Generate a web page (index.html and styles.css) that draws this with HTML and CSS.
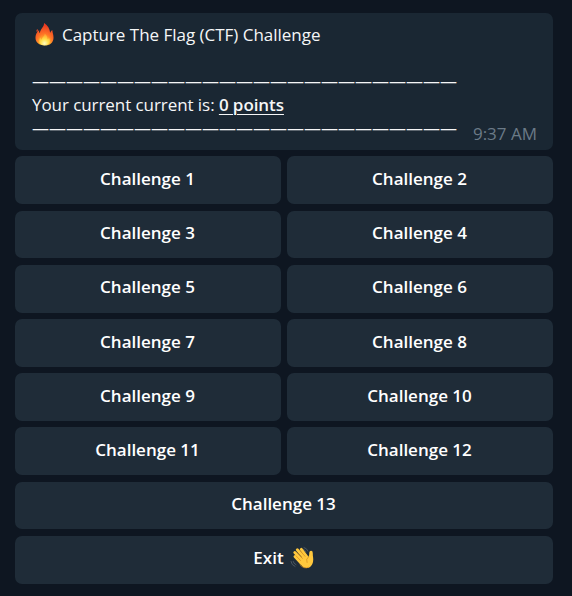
FILE: index.html
```html
<!DOCTYPE html>
<html lang="en">
<head>
<meta charset="utf-8">
<title>CTF Challenge</title>
<link rel="stylesheet" href="styles.css">
</head>
<body>
<main class="chat">
  <section class="bubble">
    <div class="line title">
      <svg class="fire" viewBox="0 0 20 24" aria-hidden="true">
        <defs>
          <radialGradient id="flame" cx=".5" cy=".95" r=".85">
            <stop offset="0" stop-color="#fff28a"/>
            <stop offset=".3" stop-color="#ffb52c"/>
            <stop offset=".55" stop-color="#ff7426"/>
            <stop offset="1" stop-color="#ea3a22"/>
          </radialGradient>
          <radialGradient id="core" cx=".5" cy=".85" r=".8">
            <stop offset="0" stop-color="#fffbc0"/>
            <stop offset=".45" stop-color="#ffe04a"/>
            <stop offset="1" stop-color="#ff9a2c"/>
          </radialGradient>
        </defs>
        <path fill="url(#flame)" d="M9.500 0C10 4 5.400 6 5.200 10.500C4.300 10 4.200 8.500 4.400 7.200C1.500 9.500.5 12.500.5 15.500C.5 20.500 4.500 23.500 10 23.500C15.500 23.500 19.500 20.500 19.500 15.300C19.500 12 18.400 10.300 18.200 7.200C16.800 8 16.200 9.300 16 10.400C15.500 6 13.500 2.500 9.500 0Z"/>
        <path fill="#ec4a26" d="M2.500 6.200C1.400 7.200 1.300 8.600 2 9.300C3.100 8.700 3.300 7.500 2.500 6.200Z"/>
        <path fill="url(#core)" d="M10 11C10.600 14 7.300 14.500 7.300 17.200C6.200 16.800 5.800 15.800 5.700 14.800C3.200 18.500 4 23 10 23.200C16 23 16.700 18.500 14.700 15.200C14.400 16.200 13.900 16.800 13.200 17C13.300 14.500 12 12.300 10 11Z"/>
      </svg>
      <span>Capture The Flag (CTF) Challenge</span>
    </div>
    <div class="line"></div>
    <div class="line">—————————————————————————</div>
    <div class="line score">Your current current is: <b class="points">0 points</b></div>
    <div class="line last">—————————————————————————<time class="time">9:37 AM</time></div>
  </section>
  <section class="keyboard">
    <button class="key">Challenge 1</button>
    <button class="key">Challenge 2</button>
    <button class="key">Challenge 3</button>
    <button class="key">Challenge 4</button>
    <button class="key">Challenge 5</button>
    <button class="key">Challenge 6</button>
    <button class="key">Challenge 7</button>
    <button class="key">Challenge 8</button>
    <button class="key">Challenge 9</button>
    <button class="key">Challenge 10</button>
    <button class="key">Challenge 11</button>
    <button class="key">Challenge 12</button>
    <button class="key wide">Challenge 13</button>
    <button class="key wide">Exit
      <svg class="wave" viewBox="0 0 24 24" aria-hidden="true">
        <g fill="none" stroke="#4c5761" stroke-width="1" stroke-linecap="round">
          <path d="M14 1.500Q17 2.200 17.800 5M13.500 3.500Q15.500 4 16 6M1 15.500Q1.400 19 5 20.500M3.200 15.500Q3.500 17.500 6 18.700"/>
        </g>
        <g fill="none" stroke="#ffc83d" stroke-width="2.900" stroke-linecap="round">
          <path d="M5 10.500L11 17M4.800 6.500L12 14M7.300 3.800L14.500 12M11.300 3.300L17 11"/>
        </g>
        <path fill="#ffc83d" d="M8 14L16 8.500L18.300 11Q19.500 9 19.300 6.500Q19.500 4.500 21.300 4.700Q23 5 22.800 7.500C22.600 10 23.800 12.500 23 16C22 21 17.500 23.500 13.500 21.300C11.500 20 9.500 17 8 14Z"/>
        <path fill="none" stroke="#d68b1d" stroke-width=".7" stroke-linecap="round" d="M6 9.800L10.500 14.500M7.500 7L12.500 12.500M10.300 5L15 10.300M18.300 11Q15.500 13 17 16.500M10 18.800Q14 23.500 18.500 21.300"/>
      </svg>
    </button>
  </section>
</main>
</body>
</html>
```
FILE: styles.css
```css
* {
  box-sizing: border-box;
}

body {
  margin: 0;
  min-height: 596px;
  background: #0e1621;
  color: #f5f6f7;
  font-family: "Open Sans", "Noto Sans", sans-serif;
  font-size: 17px;
}

.chat {
  width: 538px;
  margin-left: 15px;
  padding-top: 13px;
}

.bubble {
  height: 137px;
  padding: 10px 16px 0 17px;
  border-radius: 7px;
  background: #1a2733;
}

.line {
  height: 23.5px;
  line-height: 23.5px;
  white-space: pre;
}

.line:nth-child(2) {
  height: 22.5px;
}

.title {
  display: flex;
  align-items: center;
  letter-spacing: -0.02px;
}

.fire {
  width: 19px;
  height: 23px;
  margin: 0 8px 0 3px;
}

.score {
  letter-spacing: -0.07px;
}

.points {
  font-weight: 600;
  text-decoration: underline;
  text-decoration-thickness: 1px;
  text-underline-offset: 3px;
}

.last {
  display: flex;
  justify-content: space-between;
}

.time {
  padding-top: 6px;
  color: #6b7a87;
}

.keyboard {
  display: grid;
  grid-template-columns: 1fr 1fr;
  grid-auto-rows: 47.8px;
  gap: 6.4px 6px;
  margin-top: 6.4px;
}

.key {
  display: flex;
  align-items: center;
  justify-content: center;
  padding: 0 1px 3.6px 0;
  border: 0;
  border-radius: 7px;
  background: #1f2c38;
  color: #fff;
  font: 600 17px "Open Sans", "Noto Sans", sans-serif;
}

.wide {
  grid-column: 1 / -1;
}

.wave {
  width: 24px;
  height: 24px;
  margin-left: 6px;
}
```
